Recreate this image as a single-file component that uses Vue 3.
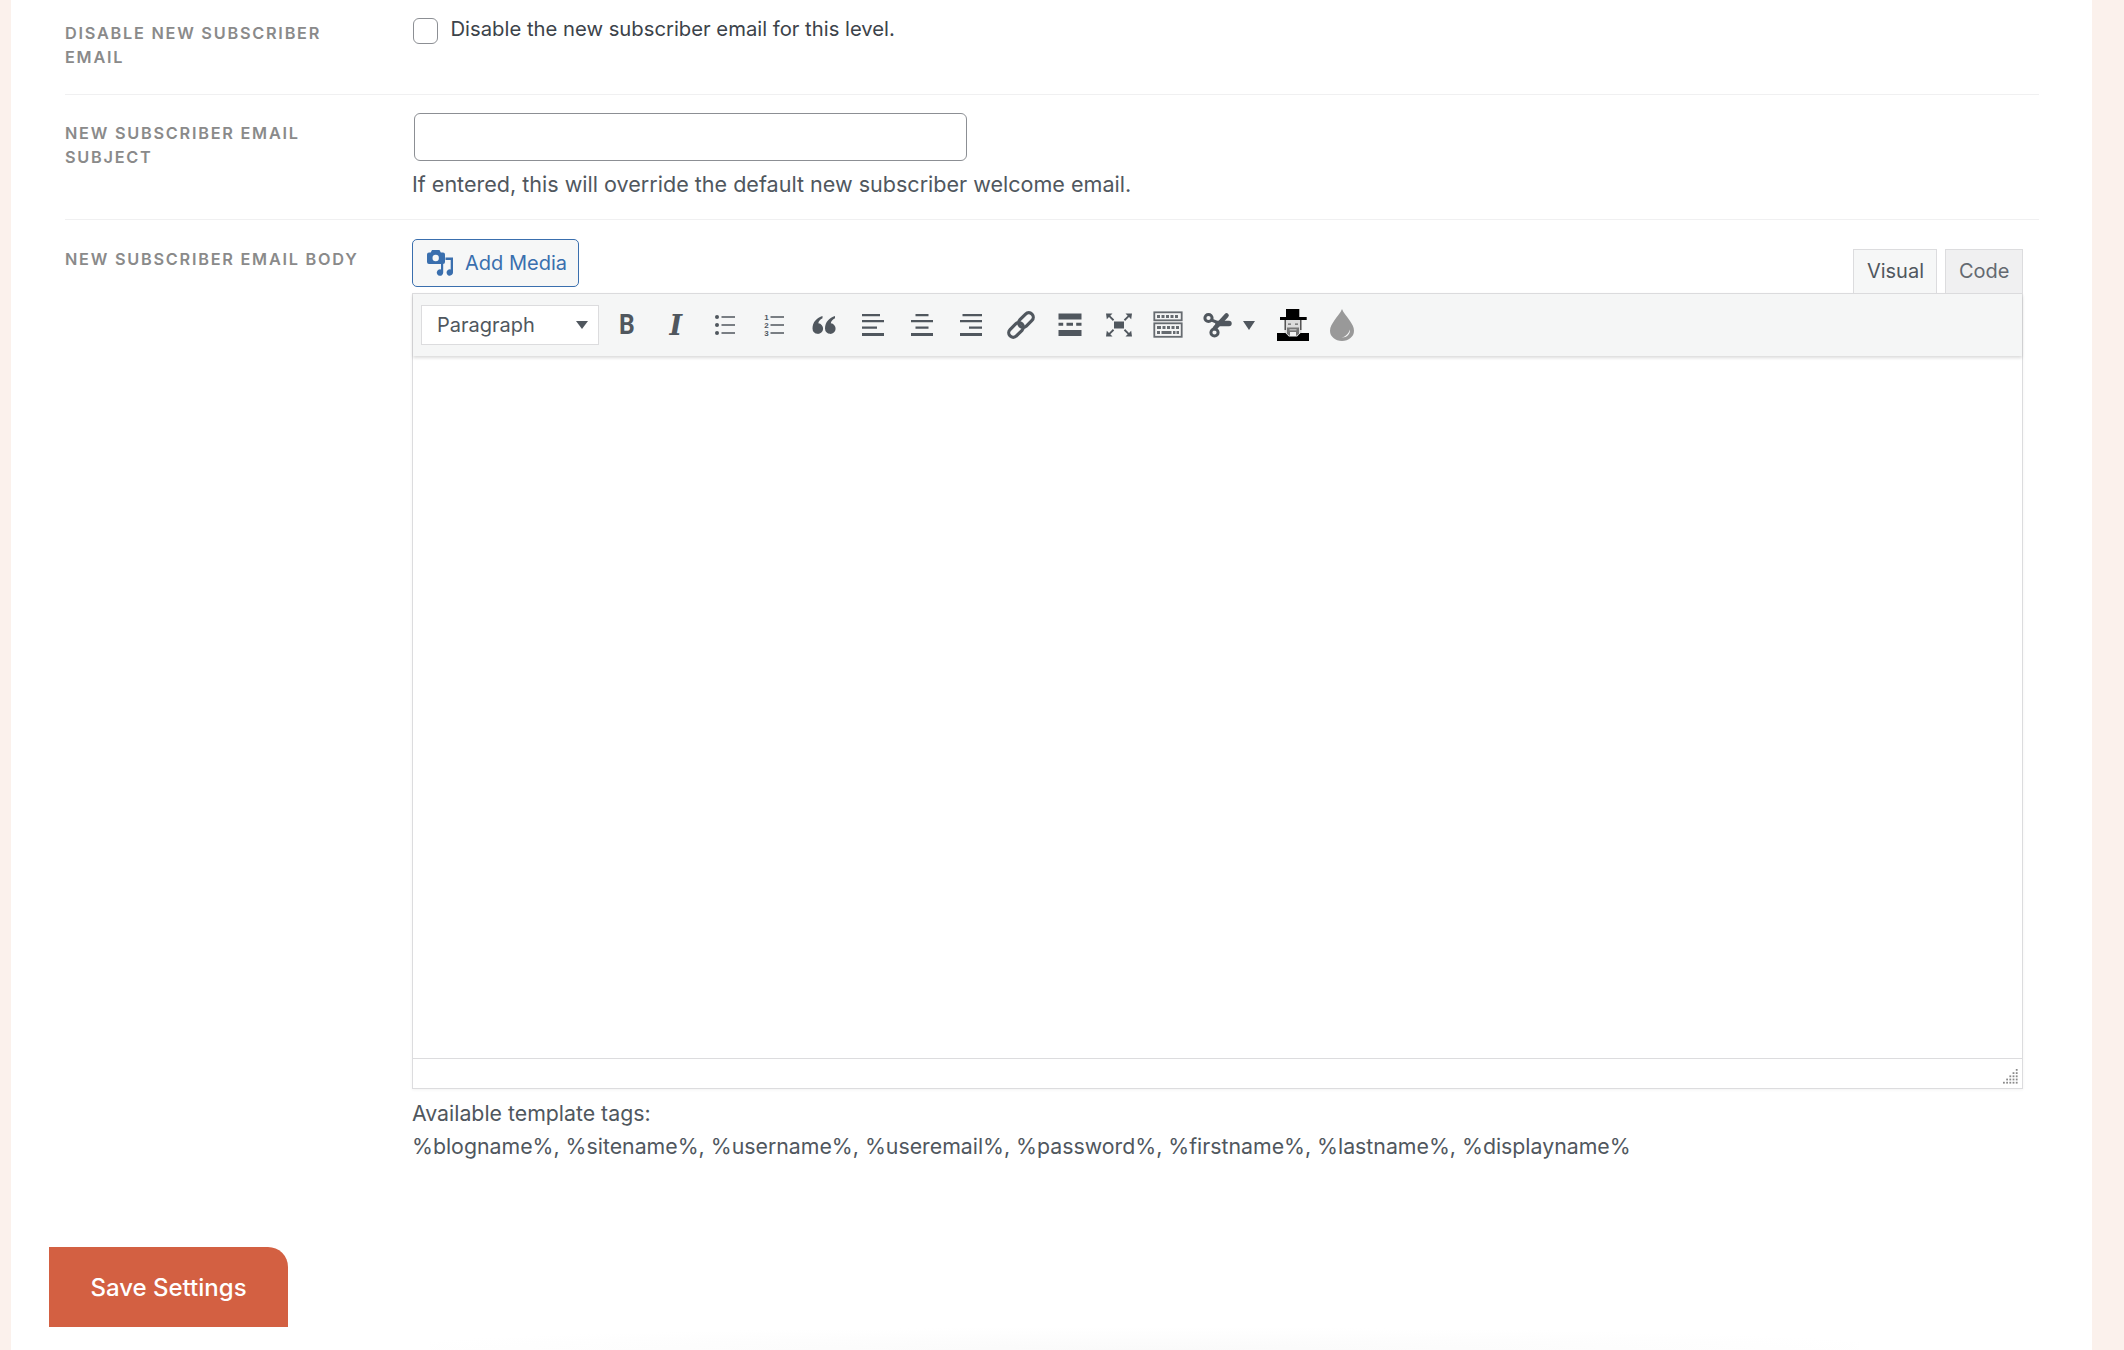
<script setup>
const resizeDots = []
for (let row = 0; row < 5; row++) {
  for (let col = 4 - row; col < 5; col++) {
    resizeDots.push({ x: col * 3.2, y: row * 3.2 })
  }
}
</script>

<template>
  <div class="page">
    <main class="panel">
      <section class="row first">
        <div class="label">Disable New Subscriber Email</div>
        <div class="field check-field">
          <span class="checkbox"></span>
          <span class="check-text">Disable the new subscriber email for this level.</span>
        </div>
      </section>

      <section class="row second">
        <div class="label">New Subscriber Email Subject</div>
        <div class="field">
          <input class="text-input" type="text" />
          <p class="help">If entered, this will override the default new subscriber welcome email.</p>
        </div>
      </section>

      <section class="row third">
        <div class="label body-label">New Subscriber Email Body</div>
        <div class="field editor-field">
          <div class="editor-head">
            <button class="media-btn" type="button">
              <svg width="26" height="26" viewBox="0 0 26 26" class="media-icon">
                <path fill="#3a6fae" d="M5 0h7.500l1.300 2.500H16a2 2 0 0 1 2 2V12a2 2 0 0 1-2 2H2a2 2 0 0 1-2-2V4.500a2 2 0 0 1 2-2h1.700z" />
                <circle cx="8.700" cy="8" r="3.200" fill="#f6f7f7" />
                <path fill="#3a6fae" d="M18.500 7.500H26v15a3.200 3.200 0 1 1-2.300-3.100V10h-5.200zM14 14h2.200v8.500a3.200 3.200 0 1 1-2.200-3z" />
              </svg>
              <span>Add Media</span>
            </button>
            <div class="tabs">
              <div class="tab active">Visual</div>
              <div class="tab">Code</div>
            </div>
          </div>

          <div class="editor">
            <div class="toolbar">
              <div class="format-select">
                <span>Paragraph</span>
                <i class="select-caret"></i>
              </div>

              <button class="tool glyph bold" type="button"><span>B</span></button>
              <button class="tool glyph italic" type="button">I</button>

              <button class="tool" type="button">
                <svg width="32" height="32" viewBox="0 0 32 32" fill="#50575e">
                  <circle cx="8" cy="8" r="2" /><circle cx="8" cy="16" r="2" /><circle cx="8" cy="24" r="2" />
                  <path d="M12.500 7.200h13.500v1.500H12.500zM12.500 15.200h13.500v1.500H12.500zM12.500 23.200h13.500v1.500H12.500z" />
                </svg>
              </button>

              <button class="tool" type="button">
                <svg width="32" height="32" viewBox="0 0 32 32" fill="#50575e">
                  <text x="8.500" y="11" class="num">1</text>
                  <text x="8.500" y="19" class="num">2</text>
                  <text x="8.500" y="27" class="num">3</text>
                  <path d="M12.500 7.200h13.500v1.500H12.500zM12.500 15.200h13.500v1.500H12.500zM12.500 23.200h13.500v1.500H12.500z" />
                </svg>
              </button>

              <button class="tool" type="button">
                <svg width="32" height="32" viewBox="0 0 32 32" fill="#50575e">
                  <path d="M14.500 7C9 8.500 4.500 13 4.500 19.500a5.300 5.300 0 1 0 5.800-5.200c.3-2 1.800-3.900 4.200-5z" />
                  <path d="M27 7c-5.500 1.500-10 6-10 12.500a5.300 5.300 0 1 0 5.800-5.200c.3-2 1.800-3.900 4.200-5z" />
                </svg>
              </button>

              <button class="tool" type="button">
                <svg width="32" height="32" viewBox="0 0 32 32" fill="#50575e">
                  <path d="M5 5h18v2.200H5zM5 11h22v2.200H5zM5 17.500h15v2.200H5zM5 24h22v3H5z" />
                </svg>
              </button>

              <button class="tool" type="button">
                <svg width="32" height="32" viewBox="0 0 32 32" fill="#50575e">
                  <path d="M9.500 5h13v2.200h-13zM5 11h22v2.200H5zM9.500 17.500h13v2.200h-13zM5 24h22v3H5z" />
                </svg>
              </button>

              <button class="tool" type="button">
                <svg width="32" height="32" viewBox="0 0 32 32" fill="#50575e">
                  <path d="M7.500 5H27v2.200H7.500zM5 11h22v2.200H5zM14 17.500h13v2.200H14zM5 24h22v3H5z" />
                </svg>
              </button>

              <button class="tool" type="button">
                <svg width="32" height="32" viewBox="0 0 32 32" fill="none" stroke="#50575e" stroke-width="3.200">
                  <g transform="rotate(45 16 16)">
                    <rect x="11.500" y="0.500" width="9" height="17" rx="4.500" />
                    <rect x="11.500" y="14.500" width="9" height="17" rx="4.500" />
                  </g>
                </svg>
              </button>

              <button class="tool" type="button">
                <svg width="32" height="32" viewBox="0 0 32 32" fill="#50575e">
                  <path d="M4.500 4.500h23v6h-23zM4.500 13.800h4.700v3h-4.700zM12.500 13.800h6.500v3h-6.500zM22.200 13.800h5.300v3h-5.300zM4.500 21h23v6h-23z" />
                </svg>
              </button>

              <button class="tool" type="button">
                <svg width="32" height="32" viewBox="0 0 32 32" fill="#50575e">
                  <path d="M11 12.500h10v7H11z" />
                  <path d="M3 4.500h6.500L7.300 6.700l3.900 3.900-1.300 1.300L6 8 3.800 10.200zM29 4.500h-6.500l2.200 2.200-3.900 3.900 1.300 1.300L26 8l2.200 2.200zM3 27.500h6.500l-2.200-2.200 3.900-3.900-1.300-1.300L6 24l-2.200-2.200zM29 27.500h-6.500l2.200-2.200-3.900-3.900 1.300-1.300L26 24l2.200-2.200z" />
                </svg>
              </button>

              <button class="tool" type="button">
                <svg width="32" height="32" viewBox="0 0 32 32">
                  <g fill="none" stroke="#666b70" stroke-width="1.800">
                    <rect x="2.300" y="3.300" width="27.400" height="8" />
                    <rect x="2.300" y="14.300" width="27.400" height="13.500" />
                  </g>
                  <path fill="#666b70" d="M5 6h3v3H5zM9.500 6h3v3h-3zM14 6h3v3h-3zM18.500 6h3v3h-3zM23 6h3v3h-3zM5 17h4v3H5zM10.500 17h3v3h-3zM15 17h3v3h-3zM19.500 17h3v3h-3zM24 17h3v3h-3zM5 22h3v3H5zM9.500 22h10v3h-10zM21 22h2.500v3H21zM24.500 22h2.500v3h-2.500z" />
                </svg>
              </button>

              <button class="tool split" type="button">
                <svg width="32" height="32" viewBox="0 0 32 32" class="split-icon">
                  <g fill="none" stroke="#50575e" stroke-width="3">
                    <circle cx="6.500" cy="9" r="3.600" />
                    <circle cx="12.500" cy="23.500" r="3.600" />
                  </g>
                  <g fill="none" stroke="#50575e">
                    <path d="M13 19L24.500 6.500" stroke-width="4.600" stroke-linecap="round" />
                    <path d="M9 10.800l9 3.700" stroke-width="3" />
                    <path d="M16 14.500h11" stroke-width="5.400" stroke-linecap="round" />
                  </g>
                </svg>
                <i class="split-caret"></i>
              </button>

              <button class="tool" type="button">
                <svg width="32" height="32" viewBox="0 0 32 32">
                  <path d="M0 24h8.500l3.500 3.500h8l3.500-3.500H32v8H0z" fill="#000" />
                  <path d="M7.500 11h17v13h-17z" fill="#dcdcdc" />
                  <path d="M7.500 11H9v10H7.500zM23 11h1.500v10H23z" fill="#555" />
                  <path d="M10 18.500h12v6.500l-3 2h-6l-3-2z" fill="#777" />
                  <path d="M12.500 20.500h7v.8h-7zM13 23h6v4h-6z" fill="#f4f4f4" />
                  <path d="M11 14.500h3v1.200h-3zM18 14.500h3v1.200h-3z" fill="#666" />
                  <path d="M9 0h13.300v8H9zM3 8h26.700v3H3z" fill="#000" />
                </svg>
              </button>

              <button class="tool" type="button">
                <svg width="32" height="32" viewBox="0 0 32 32">
                  <path fill="#999" d="M16 0c1.200 3.500 4.800 7.200 8 12 1.900 2.900 4 6 4 9.800C28 27.800 22.600 32 16 32S4 27.800 4 21.800c0-3.800 2.100-6.900 4-9.800 3.200-4.800 6.800-8.500 8-12z" />
                  <path fill="#f6f7f7" d="M24 20.500c.4 4.900-3.500 8.300-8.500 8 3.500-.6 6.800-3.200 8.500-8z" />
                </svg>
              </button>
            </div>

            <div class="edit-area"></div>

            <div class="status">
              <svg class="resize" width="16" height="16" viewBox="0 0 16 16" fill="#8a8a8a">
                <rect v-for="(d, i) in resizeDots" :key="i" :x="d.x" :y="d.y" width="1.800" height="1.800" />
              </svg>
            </div>
          </div>

          <p class="tags">Available template tags:<br />%blogname%, %sitename%, %username%, %useremail%, %password%, %firstname%, %lastname%, %displayname%</p>
        </div>
      </section>

      <div class="actions">
        <button class="save" type="button">Save Settings</button>
      </div>
      <div class="fade"></div>
    </main>
  </div>
</template>

<style>
html, body { margin: 0; background: #fbf1ec; }
</style>

<style scoped>
.page {
  display: flex;
  height: 1350px;
  padding: 0 32px 0 11px;
  box-sizing: border-box;
  overflow: hidden;
  font-family: Inter, "Liberation Sans", sans-serif;
  color: #50575e;
}
.panel {
  flex: 1;
  min-width: 0;
  background: #fff;
  display: flex;
  flex-direction: column;
  padding: 0 53px 0 54px;
}
.row {
  display: grid;
  grid-template-columns: 347px minmax(0, 1fr);
  border-bottom: 1.5px solid #f0f0f1;
  box-sizing: border-box;
}
.first { height: 95px; padding-top: 21px; }
.second { height: 125px; padding-top: 18px; }
.third { padding-top: 19px; border-bottom: 0; }
.label {
  font-size: 16.300px;
  font-weight: 600;
  line-height: 24px;
  letter-spacing: 1.750px;
  text-transform: uppercase;
  color: #8a8a8a;
  max-width: 280px;
}
.second .label { margin-top: 8px; }
.body-label { max-width: 340px; margin-top: 8px; }
.check-field { display: flex; align-items: flex-start; margin-top: -3px; }
.checkbox {
  width: 25px;
  height: 26px;
  box-sizing: border-box;
  border: 1.500px solid #8c8f94;
  border-radius: 6px;
  background: #fff;
  margin: 0 13px 0 .5px;
}
.check-text { font-size: 20.250px; line-height: 24px; color: #3c434a; margin-top: -1px; }
.text-input {
  display: block;
  width: 553px;
  height: 48px;
  margin: 0 0 0 2px;
  box-sizing: border-box;
  border: 1.500px solid #8c8f94;
  border-radius: 6px;
  background: #fff;
}
.help { margin: 8px 0 0; font-size: 21.550px; line-height: 30px; }
.editor-field { margin-right: 16px; }
.editor-head { display: flex; justify-content: space-between; height: 54px; }
.media-btn {
  display: flex;
  align-items: center;
  width: 167px;
  height: 48px;
  box-sizing: border-box;
  padding: 0 0 0 14px;
  border: 1.500px solid #3a6fae;
  border-radius: 5px;
  background: #f6f7f7;
  color: #3a6fae;
  font: 400 20px Inter, "Liberation Sans", sans-serif;
}
.media-icon { margin-right: 12px; }
.tabs { display: flex; align-items: flex-end; gap: 8px; }
.tab {
  height: 44px;
  box-sizing: border-box;
  border: 1.500px solid #dcdcde;
  border-bottom: 0;
  display: flex;
  align-items: center;
  justify-content: center;
  padding: 0 12.500px 2px;
  font-size: 20px;
  background: #f0f0f1;
  color: #646970;
}
.tab.active { background: #f6f7f7; color: #50575e; }
.editor {
  border: 1.500px solid #dcdcde;
  box-sizing: border-box;
  box-shadow: 0 1px 3px rgba(0, 0, 0, .05);
}
.toolbar {
  display: flex;
  align-items: center;
  height: 62px;
  background: #f5f6f6;
  padding-left: 8px;
  box-shadow: 0 2px 3px rgba(0, 0, 0, .14);
  position: relative;
}
.format-select {
  width: 178px;
  height: 40px;
  box-sizing: border-box;
  border: 1.500px solid #dcdcde;
  background: #fff;
  display: flex;
  align-items: center;
  justify-content: space-between;
  padding: 0 10px 0 15px;
  font-size: 20px;
  margin-right: 3px;
}
.select-caret {
  width: 0; height: 0;
  border-left: 6px solid transparent;
  border-right: 6px solid transparent;
  border-top: 8px solid #50575e;
}
.tool {
  width: 49.250px;
  height: 40px;
  border: 0;
  padding: 0;
  background: transparent;
  display: flex;
  align-items: center;
  justify-content: center;
  flex: none;
  color: #50575e;
}
.glyph { font-size: 27px; line-height: 40px; }
.bold { font-family: Roboto, sans-serif; font-weight: 700; font-size: 28px; }
.bold span { display: inline-block; transform: scaleX(.88); }
.italic { font-family: "DejaVu Serif", serif; font-weight: 700; font-style: italic; padding-top: 2px; box-sizing: border-box; }
.num { font: 700 8px "Liberation Sans", sans-serif; text-anchor: middle; }
.split { width: 75px; justify-content: flex-start; padding-left: 9px; box-sizing: border-box; }
.split-caret {
  width: 0; height: 0;
  margin-left: 9px;
  border-left: 6px solid transparent;
  border-right: 6px solid transparent;
  border-top: 9px solid #50575e;
}
.edit-area { height: 702px; background: #fff; border-bottom: 1.500px solid #dcdcde; }
.status { height: 28.500px; background: #fff; position: relative; }
.resize { position: absolute; right: 3px; bottom: 3px; }
.tags { margin: 8px 0 0; font-size: 21.300px; line-height: 33.500px; }
.actions { margin-top: auto; margin-left: -16px; }
.save {
  display: block;
  width: 239px;
  height: 80px;
  border: 0;
  padding: 0;
  border-radius: 0 20px 0 0;
  background: #d36042;
  color: #fff;
  font: 500 24px Inter, "Liberation Sans", sans-serif;
}
.fade {
  height: 23px;
  margin: 0 180px 0 365px;
  background: radial-gradient(ellipse 55% 100% at 50% 100%, #fafafa, #fff);
}
</style>
